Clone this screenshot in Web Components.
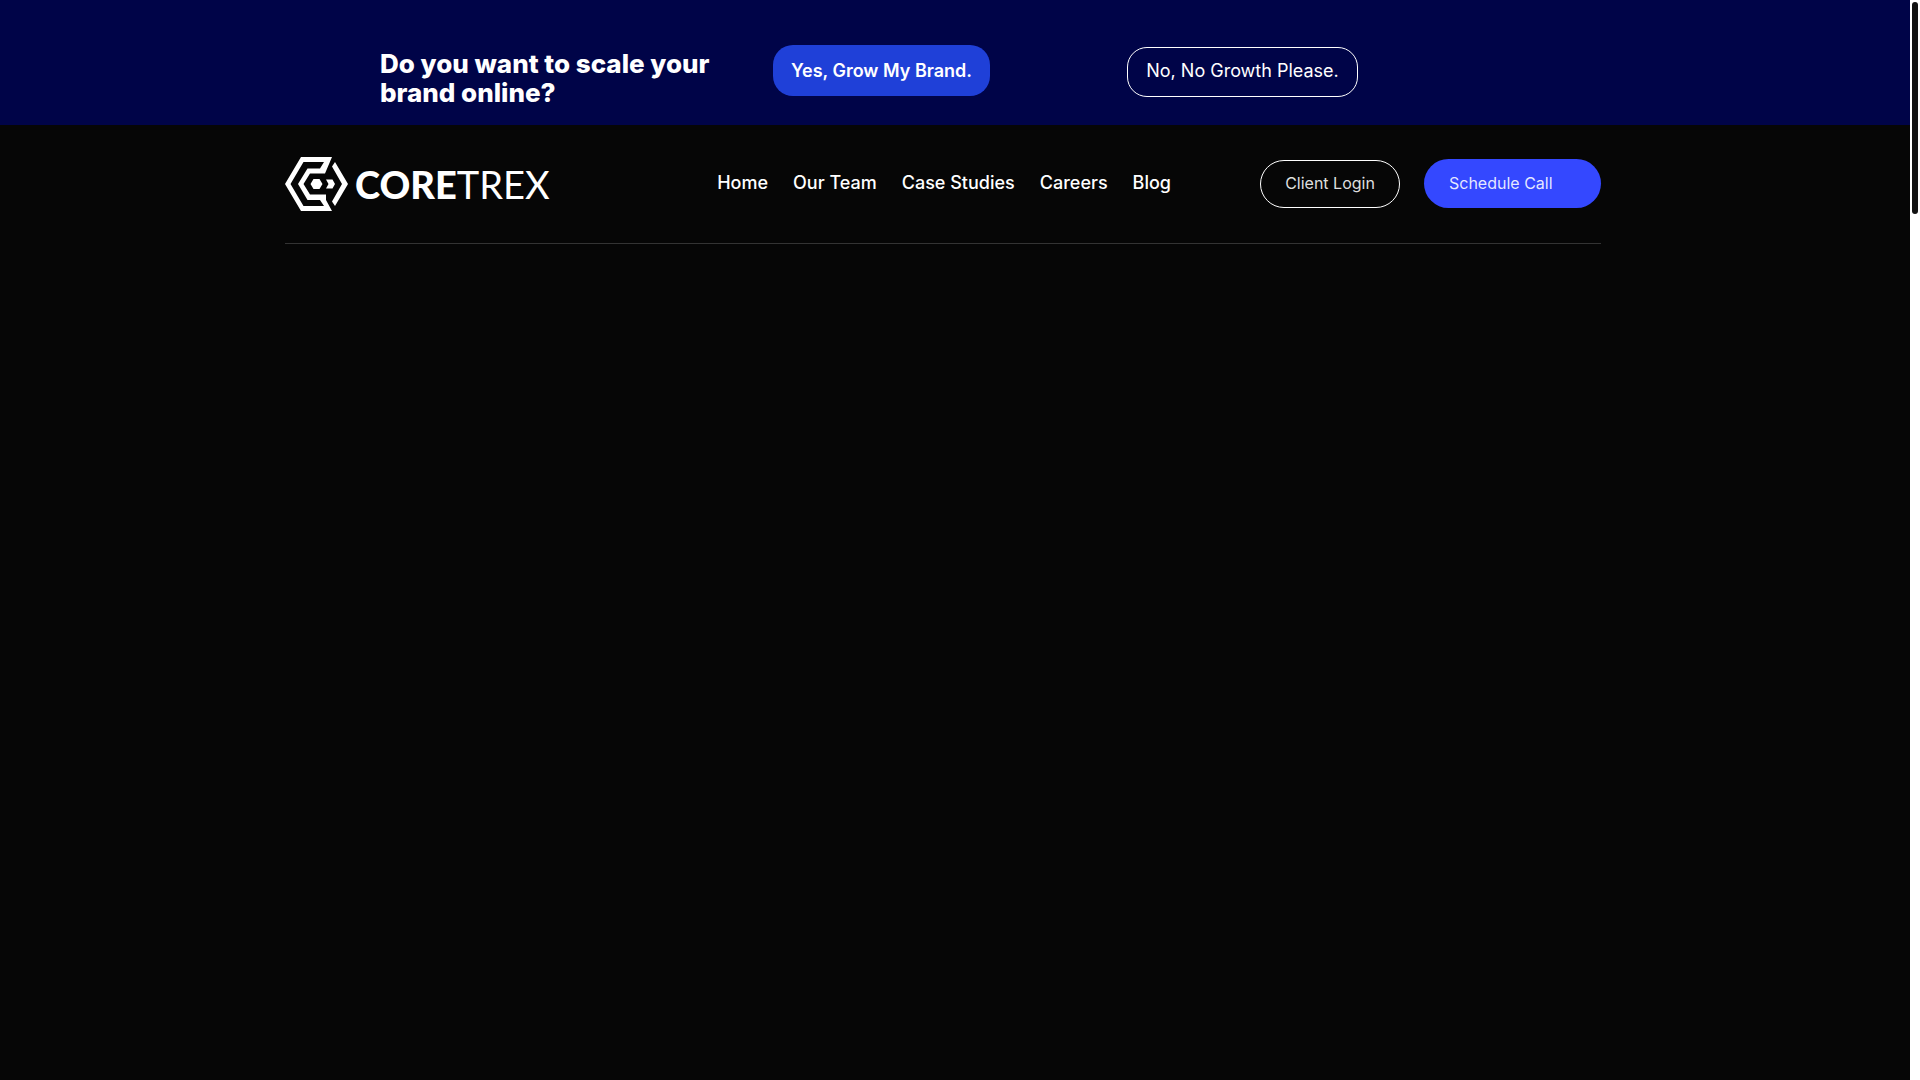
<!DOCTYPE html>
<html lang="en">
<head>
<meta charset="utf-8">
<meta name="viewport" content="width=device-width, initial-scale=1">
<title>Coretrex</title>
<style>
html,body{margin:0;background:#060606}
body{font-family:Inter,"Liberation Sans",sans-serif;color:#fff}
</style>
</head>
<body>
<ct-page>
  <ct-banner>
    <span slot="title">Do you want to scale your brand online?</span>
    <ct-button slot="yes" kind="yes">Yes, Grow My Brand.</ct-button>
    <ct-button slot="no" kind="no">No, No Growth Please.</ct-button>
  </ct-banner>
  <ct-header>
    <ct-logo slot="logo"></ct-logo>
    <ct-link slot="nav">Home</ct-link>
    <ct-link slot="nav">Our Team</ct-link>
    <ct-link slot="nav">Case Studies</ct-link>
    <ct-link slot="nav">Careers</ct-link>
    <ct-link slot="nav">Blog</ct-link>
    <ct-button slot="actions" kind="login">Client Login</ct-button>
    <ct-button slot="actions" kind="call">Schedule Call</ct-button>
  </ct-header>
</ct-page>
<script>
const define = (name, html) => {
  const template = document.createElement('template');
  template.innerHTML = html;
  customElements.define(name, class extends HTMLElement {
    constructor() {
      super();
      this.attachShadow({ mode: 'open' }).append(template.content.cloneNode(true));
    }
  });
};

define('ct-scrollbar', `
<style>
:host{display:block;box-sizing:border-box;width:10px;padding:2px;background:#fff}
div{height:20%;max-height:212px;border-radius:3px;background:#111}
</style>
<div></div>`);

define('ct-page', `
<style>
:host{display:flex;height:100vh;background:#060606}
main{flex:1;min-width:0}
</style>
<main><slot></slot></main>
<ct-scrollbar></ct-scrollbar>`);

define('ct-banner', `
<style>
:host{display:block;background:#000448}
.row{box-sizing:border-box;display:grid;grid-template-columns:393fr 354fr 403fr;align-items:start;max-width:1150px;height:125px;margin:0 auto;padding-top:45px}
h2{margin:4px 0 0;max-width:350px;font-size:26px;line-height:29px;font-weight:800}
.no{padding-top:2px}
</style>
<div class="row">
  <h2><slot name="title"></slot></h2>
  <div><slot name="yes"></slot></div>
  <div class="no"><slot name="no"></slot></div>
</div>`);

define('ct-header', `
<style>
:host{display:block}
header{max-width:1316px;margin:0 auto;padding-right:24px}
.row{display:flex;align-items:center;height:118px;border-bottom:1px solid #333}
nav{display:flex;gap:25px;margin-left:auto;margin-right:89px;padding-bottom:2px}
.actions{display:flex;align-items:flex-end;gap:24px;padding-bottom:1px}
</style>
<header><div class="row">
  <slot name="logo"></slot>
  <nav><slot name="nav"></slot></nav>
  <div class="actions"><slot name="actions"></slot></div>
</div></header>`);

define('ct-link', `
<style>
:host{display:block}
a{color:#fff;text-decoration:none;font-size:18px;line-height:24px;font-weight:500;white-space:nowrap}
</style>
<a href="#"><slot></slot></a>`);

define('ct-button', `
<style>
:host{display:block}
button{display:block;box-sizing:border-box;margin:0;padding:0 0 2px;border:1px solid #fff;background:none;color:#fff;font-family:inherit;font-size:18px;line-height:24px;white-space:nowrap;cursor:pointer}
:host([kind=yes]) button{width:217px;height:51px;padding:0;border:0;border-radius:20px;background:#1f40d8;font-weight:600}
:host([kind=no]) button{width:231px;height:50px;border-radius:20px}
:host([kind=login]) button{width:140px;height:48px;border-radius:24px;font-size:16px}
:host([kind=call]) button{width:177px;height:49px;border:0;border-radius:25px;padding-left:25px;background:#3448ff;font-size:16px;text-align:left}
:host([kind=login]) button,:host([kind=call]) button{color:#ffffffe0}
</style>
<button type="button"><slot></slot></button>`);

define('ct-logo', `
<style>
:host{display:block}
a{display:flex;align-items:center;gap:6px;color:#fff;text-decoration:none}
svg{display:block}
span{font:400 38px/48px Lato,sans-serif}
b{font-weight:900}
</style>
<a href="#" aria-label="Coretrex home">
<svg width="64" height="54" viewBox="0 0 64 54" fill="#fff">
<path d="M16 0H47L40 16.500H25L18.500 27L25 37.500H41V43L47 54H16L0 27Z"/>
<path d="M18.500 5H39L35 11.500H22.500L13 27L22.500 43H35L39 49H18.500L5.500 27Z" fill="#060606"/>
<path d="M50 5L63 27L50 49L47 44.500L57 27L47 9.500Z"/>
<path d="M28.500 22H34.500L37.500 27L34.500 32H28.500L25.500 27ZM41 22.500H47.500L50 27L47.500 31.500H41L43.500 27Z"/>
</svg>
<span><b>CORE</b>TREX</span></a>`);
</script>
</body>
</html>
